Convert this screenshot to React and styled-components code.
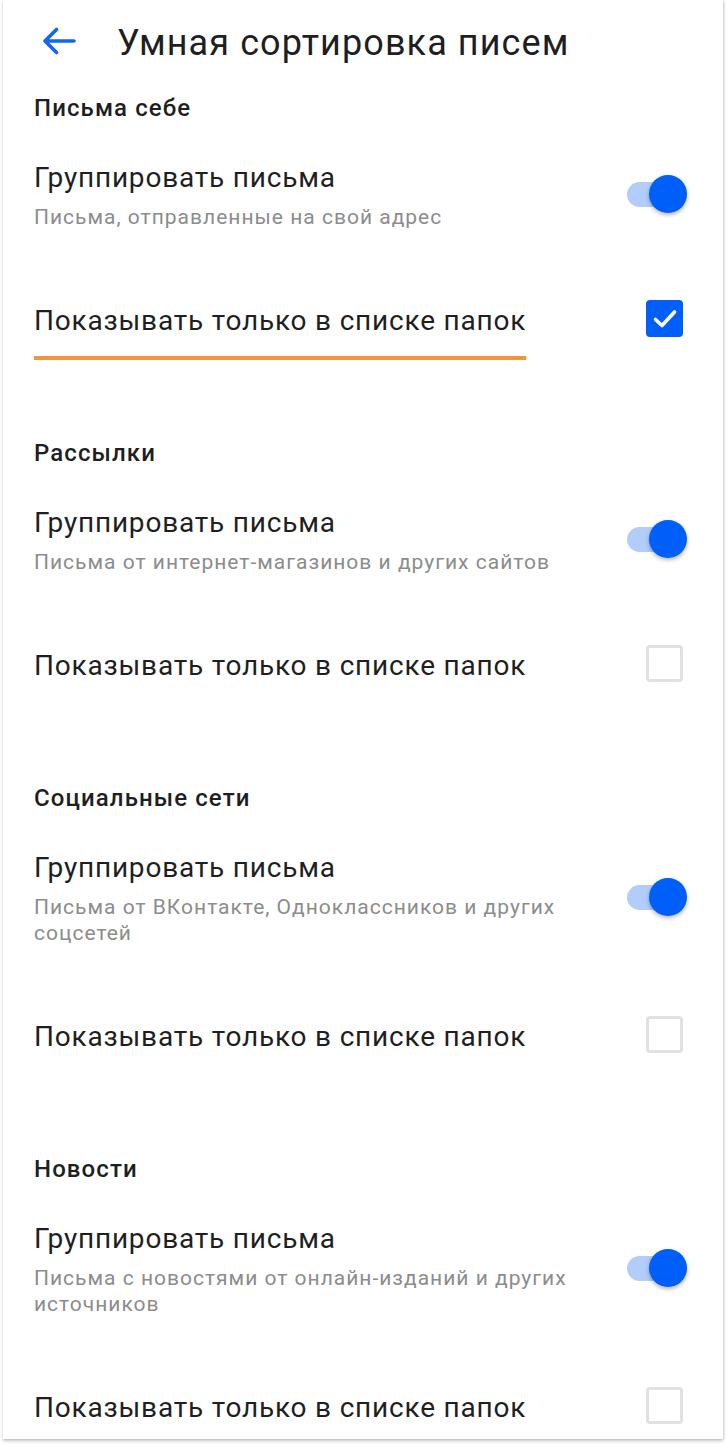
import React from "react";
import styled, { createGlobalStyle } from "styled-components";

const Global = createGlobalStyle`
  html, body { margin: 0; padding: 0; background: #ffffff; }
  body { font-family: Roboto, "Noto Sans", Arial, sans-serif; -webkit-font-smoothing: antialiased; }
`;

const Page = styled.div`
  padding: 0 0 8px 3px;
`;

const Card = styled.div`
  width: 720px;
  background: #ffffff;
  box-shadow: 0 2px 3px rgba(0, 0, 0, 0.22), 1px 0 2px rgba(0, 0, 0, 0.12);
  padding-bottom: 14px;
`;

const TopBar = styled.header`
  height: 86px;
  display: flex;
  align-items: center;
  padding-left: 39px;
  gap: 41px;
`;

const BackButton = styled.button`
  border: 0;
  background: none;
  padding: 0;
  width: 34px;
  height: 28px;
  display: flex;
  align-items: center;
  justify-content: center;
  cursor: pointer;
  margin-top: -4px;
`;

const Title = styled.h1`
  margin: 0;
  font-size: 36px;
  font-weight: 400;
  color: #1f1f1f;
  line-height: 44px;
  letter-spacing: 1.1px;
`;

const Section = styled.section`
  padding: ${(p) => (p.$first ? "7px" : "100px")} 36px 0 31px;
`;

const SectionTitle = styled.h2`
  margin: 0;
  font-size: 24px;
  font-weight: 500;
  line-height: 30px;
  color: #1f1f1f;
  letter-spacing: 1.1px;
`;

const Row = styled.div`
  display: flex;
  align-items: center;
  justify-content: space-between;
  margin-top: ${(p) => p.$gap}px;
`;

const TextBlock = styled.div`
  display: flex;
  flex-direction: column;
  gap: 9px;
  max-width: 560px;
`;

const ItemTitle = styled.div`
  font-size: 28px;
  line-height: 34px;
  color: #1f1f1f;
  letter-spacing: 0.8px;
  ${(p) =>
    p.$marked &&
    `
    text-decoration: underline;
    text-decoration-color: #ef973a;
    text-decoration-thickness: 4px;
    text-underline-offset: 26px;
    text-decoration-skip-ink: none;
  `}
`;

const Subtitle = styled.div`
  font-size: 21px;
  line-height: 26px;
  color: #8c8c8c;
  letter-spacing: 1px;
`;

const SwitchBox = styled.div`
  position: relative;
  width: 60px;
  height: 38px;
  flex-shrink: 0;
  margin-top: -3px;
`;

const Track = styled.div`
  position: absolute;
  left: 0;
  top: 7px;
  width: 54px;
  height: 25px;
  border-radius: 13px;
  background: #b3cdfb;
`;

const Knob = styled.div`
  position: absolute;
  right: 0;
  top: 0;
  width: 38px;
  height: 38px;
  border-radius: 50%;
  background: #005ff9;
  box-shadow: 0 2px 4px rgba(0, 0, 0, 0.3);
`;

const CheckBox = styled.div`
  width: 37px;
  height: 37px;
  box-sizing: border-box;
  border-radius: 4px;
  margin-right: 4px;
  margin-top: -5px;
  flex-shrink: 0;
  display: flex;
  align-items: center;
  justify-content: center;
  background: ${(p) => (p.$checked ? "#005ff9" : "#ffffff")};
  border: ${(p) => (p.$checked ? "none" : "3px solid #e1e1e1")};
`;

const Arrow = () => (
  <svg width="34" height="28" viewBox="0 0 34 28" fill="none">
    <path
      d="M3 14H32M14.5 2.5L3 14L14.5 25.5"
      stroke="#1565f0"
      strokeWidth="3.6"
      strokeLinecap="round"
      strokeLinejoin="round"
    />
  </svg>
);

const Tick = () => (
  <svg width="26" height="22" viewBox="0 0 26 22" fill="none">
    <path
      d="M3.5 11.5L10 17.5L22.5 4"
      stroke="#ffffff"
      strokeWidth="3.6"
      strokeLinecap="round"
      strokeLinejoin="round"
    />
  </svg>
);

const Switch = () => (
  <SwitchBox>
    <Track />
    <Knob />
  </SwitchBox>
);

const sections = [
  { title: "Письма себе", sub: "Письма, отправленные на свой адрес", checked: true },
  { title: "Рассылки", sub: "Письма от интернет-магазинов и других сайтов", checked: false },
  { title: "Социальные сети", sub: "Письма от ВКонтакте, Одноклассников и других соцсетей", checked: false },
  { title: "Новости", sub: "Письма с новостями от онлайн-изданий и других источников", checked: false },
];

export default function App() {
  return (
    <Page>
      <Global />
      <Card>
        <TopBar>
          <BackButton aria-label="Назад">
            <Arrow />
          </BackButton>
          <Title>Умная сортировка писем</Title>
        </TopBar>
        {sections.map((s, i) => (
          <Section key={s.title} $first={i === 0}>
            <SectionTitle>{s.title}</SectionTitle>
            <Row $gap={38}>
              <TextBlock>
                <ItemTitle>Группировать письма</ItemTitle>
                <Subtitle>{s.sub}</Subtitle>
              </TextBlock>
              <Switch />
            </Row>
            <Row $gap={74}>
              <ItemTitle $marked={s.checked}>Показывать только в списке папок</ItemTitle>
              <CheckBox $checked={s.checked}>{s.checked && <Tick />}</CheckBox>
            </Row>
          </Section>
        ))}
      </Card>
    </Page>
  );
}
